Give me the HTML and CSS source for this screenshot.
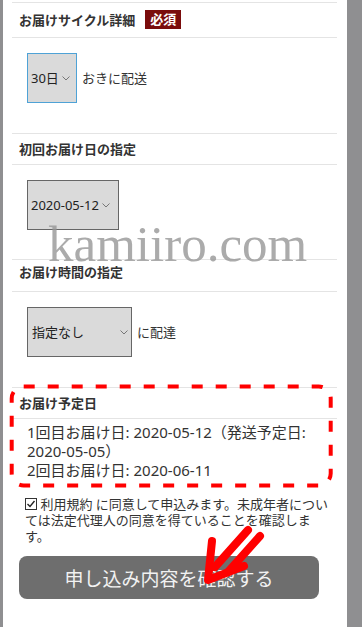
FILE: index.html
```html
<!DOCTYPE html>
<html lang="ja">
<head>
<meta charset="utf-8">
<title>お届け設定</title>
<link rel="stylesheet" href="styles.css">
</head>
<body>
<div class="page">
  <section class="sec">
    <div class="head head-tall"><span class="label">お届けサイクル詳細</span><span class="badge">必須</span></div>
    <div class="body">
      <div class="sel sel-focus sel-cycle"><span>30日</span><svg class="chev" width="8" height="5" viewBox="0 0 8 5"><polyline points="0.5,0.5 4,4 7.5,0.5" fill="none" stroke="#777" stroke-width="1"/></svg></div>
      <span class="after">おきに配送</span>
    </div>
  </section>
  <section class="sec">
    <div class="head"><span class="label">初回お届け日の指定</span></div>
    <div class="body body-2">
      <div class="sel sel-date"><span>2020-05-12</span><svg class="chev" width="8" height="5" viewBox="0 0 8 5"><polyline points="0.5,0.5 4,4 7.5,0.5" fill="none" stroke="#777" stroke-width="1"/></svg></div>
    </div>
  </section>
  <section class="sec">
    <div class="head head-3"><span class="label">お届け時間の指定</span></div>
    <div class="body">
      <div class="sel sel-time"><span>指定なし</span><svg class="chev" width="8" height="5" viewBox="0 0 8 5"><polyline points="0.5,0.5 4,4 7.5,0.5" fill="none" stroke="#777" stroke-width="1"/></svg></div>
      <span class="after">に配達</span>
    </div>
  </section>
  <section class="sec sec-last">
    <div class="head"><span class="label">お届け予定日</span></div>
    <div class="dates">1回目お届け日: 2020-05-12（発送予定日: 2020-05-05）<br>2回目お届け日: 2020-06-11</div>
  </section>
  <div class="agree"><svg class="check" width="12" height="12" viewBox="0 0 12 12"><rect x="0.5" y="0.5" width="11" height="11" fill="#fff" stroke="#333"/><polyline points="2.5,6 5,8.5 9.5,3" fill="none" stroke="#222" stroke-width="1.4"/></svg> 利用規約 に同意して申込みます。未成年者については法定代理人の同意を得ていることを確認します。</div>
  <button class="submit" type="button">申し込み内容を確認する</button>

  <div class="watermark">kamiiro.com</div>
  <svg class="annot" width="344" height="627" viewBox="0 0 344 627">
    <rect x="8.7" y="386.5" width="319" height="99" rx="12" ry="12" fill="none" stroke="#ff0000" stroke-width="4" stroke-dasharray="11 13"/>
    <g fill="none" stroke="#ff0000" stroke-width="8" stroke-linecap="round" stroke-linejoin="round">
      <line x1="245" y1="530" x2="212" y2="567"/>
      <line x1="257" y1="536" x2="225" y2="572"/>
      <polyline points="209,541 205,580 241,566"/>
    </g>
  </svg>
</div>
</body>
</html>
```

FILE: styles.css
```css
html, body {
  margin: 0;
  padding: 0;
}
body {
  background: #8f8f91;
  width: 362px;
  height: 627px;
  overflow: hidden;
  font-family: "Noto Sans", "Noto Sans CJK JP", sans-serif;
  color: #333;
}
.page {
  position: relative;
  margin-left: 3px;
  width: 344px;
  height: 627px;
  background: #fff;
  padding-top: 2px;
  box-sizing: border-box;
}
.sec {
  margin: 0 10px 0 9px;
  border-top: 1px solid #e4e4e4;
}
.head {
  height: 30px;
  border-bottom: 1px solid #e4e4e4;
  display: flex;
  align-items: center;
  padding-left: 7px;
}
.head-tall {
  height: 34px;
}
.head-3 {
  box-sizing: border-box;
  padding-bottom: 7px;
  height: 32px;
}
.label {
  font-size: 13px;
  font-weight: 700;
  color: #333;
  line-height: 16px;
}
.badge {
  margin-left: 10px;
  background: #7a0c0c;
  color: #fff;
  font-size: 13px;
  font-weight: 700;
  line-height: 19px;
  padding: 0 5px;
  height: 19px;
  margin-top: -1px;
}
.body {
  display: flex;
  align-items: center;
  padding: 15px 0 30px 15px;
}
.body-2 {
  padding-bottom: 29px;
}
.sel {
  height: 50px;
  box-sizing: border-box;
  border: 1px solid #666;
  background: #dadada;
  display: flex;
  align-items: center;
  padding-left: 3px;
  font-size: 13px;
  line-height: 16px;
  color: #222;
}
.sel .chev {
  margin-left: auto;
}
.sel-focus {
  border-color: #4ea2d6;
}
.sel-cycle {
  width: 50px;
  padding-right: 6px;
}
.sel-date {
  width: 92px;
  padding-right: 8px;
}
.sel-time {
  width: 105px;
  padding-left: 4px;
  padding-right: 3px;
}
.after {
  margin-left: 5px;
  font-size: 13px;
  line-height: 16px;
  color: #333;
}
.dates {
  padding: 4px 0 0 15px;
  font-size: 15px;
  line-height: 19px;
  color: #333;
}
.agree {
  margin: 16px 0 0 22px;
  width: 310px;
  font-size: 13px;
  line-height: 16px;
  color: #333;
}
.check {
  vertical-align: -1px;
}
.submit {
  display: block;
  margin: 12px 0 0 16px;
  width: 300px;
  height: 43px;
  border: none;
  border-radius: 8px;
  background: #6e6e6e;
  color: #f2f2f2;
  font-family: "Noto Sans CJK JP", sans-serif;
  font-size: 19px;
  padding: 0;
}
.watermark {
  position: absolute;
  left: 45px;
  top: 225px;
  font-family: "Liberation Serif", serif;
  font-size: 51px;
  line-height: 38px;
  color: rgba(150, 150, 150, 0.8);
  pointer-events: none;
}
.annot {
  position: absolute;
  left: 0;
  top: 0;
  pointer-events: none;
}
```
